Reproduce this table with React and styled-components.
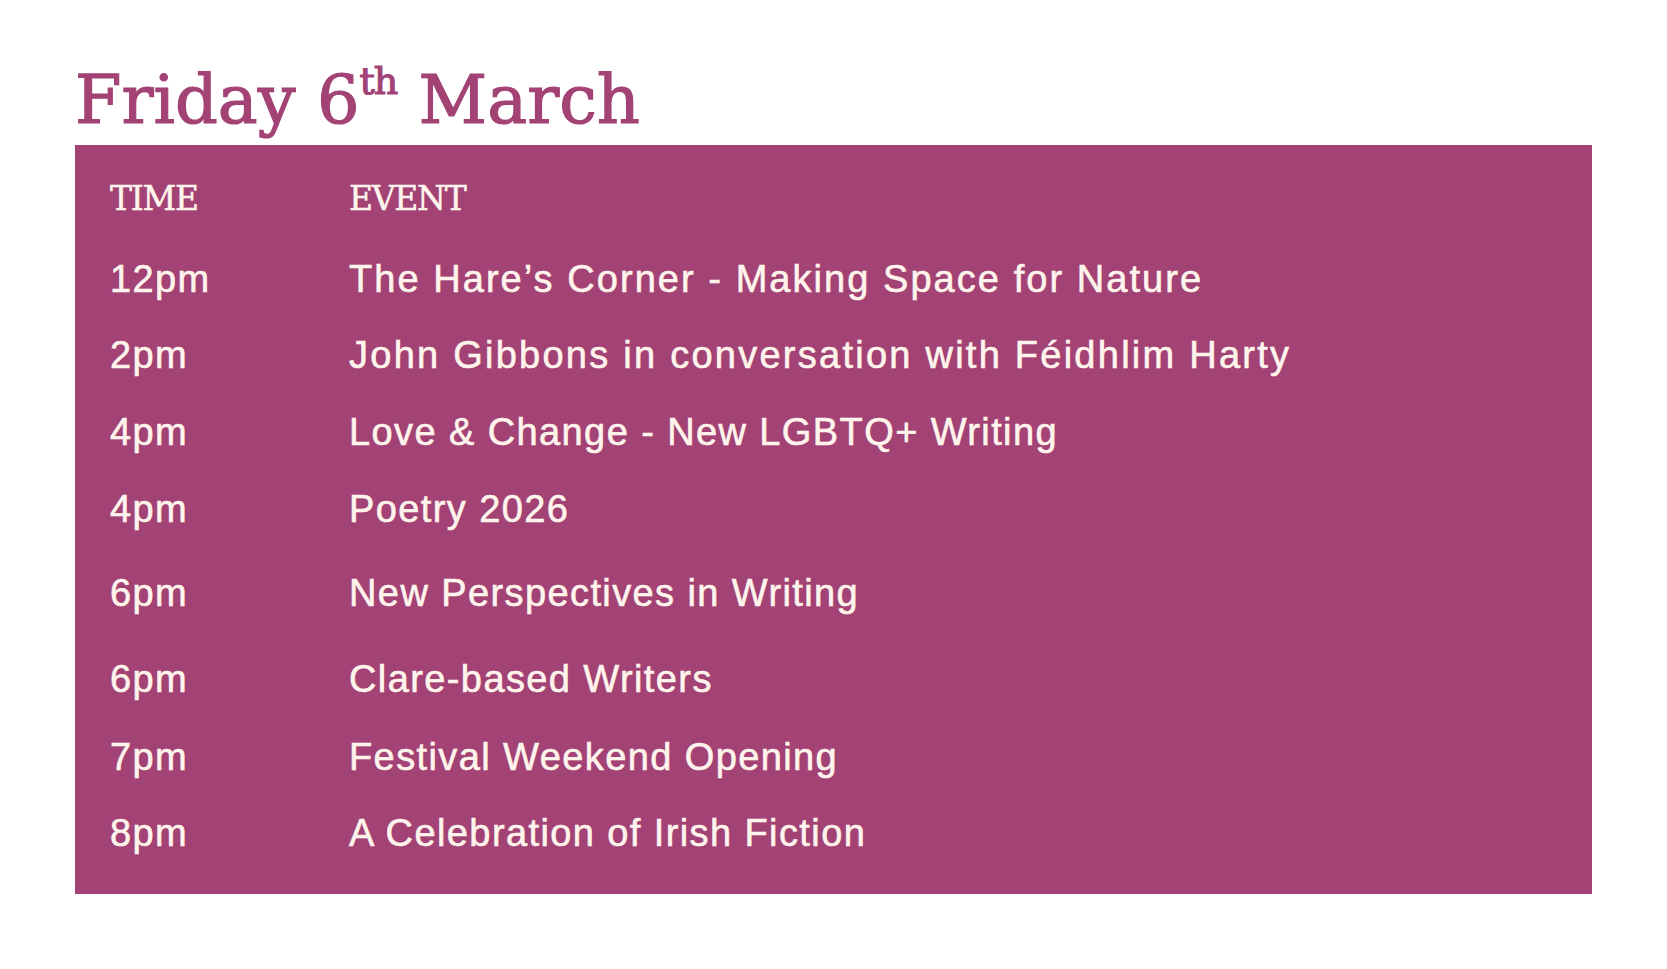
import React from 'react';
import styled, { createGlobalStyle } from 'styled-components';

const GlobalStyle = createGlobalStyle`
  html, body {
    margin: 0;
    padding: 0;
    background: #ffffff;
  }
`;

const Page = styled.div`
  padding: 67px 75px 0 75px;
`;

const Title = styled.h1`
  margin: 0 0 11px 0;
  font-family: "DejaVu Serif", serif;
  font-weight: 400;
  font-size: 67px;
  line-height: 67px;
  color: #a34275;
  -webkit-text-stroke: 1.2px #a34275;
`;

const Sup = styled.span`
  font-size: 38px;
  line-height: 0;
  vertical-align: 29px;
  letter-spacing: -1px;
`;

const Panel = styled.div`
  width: 1517px;
  box-sizing: border-box;
  background: #a34275;
  padding: 34px 35px 22px 35px;
  color: #fff4ec;
`;

const Row = styled.div`
  display: grid;
  grid-template-columns: 239px 1fr;
  margin-top: ${(p) => p.$extra || 0}px;
`;

const HeadCell = styled.div`
  font-family: "DejaVu Serif", serif;
  font-size: 33px;
  line-height: 40px;
  letter-spacing: -1.3px;
  -webkit-text-stroke: 0.5px #fff4ec;
  margin-bottom: 22px;
`;

const Cell = styled.div`
  font-family: "Liberation Sans", Arial, sans-serif;
  font-size: 38px;
  line-height: 77px;
  letter-spacing: ${(p) => p.$track || 1.4}px;
  -webkit-text-stroke: 0.6px #fff4ec;
`;

const events = [
  { time: '12pm', title: 'The Hare’s Corner - Making Space for Nature', track: 2.05 },
  { time: '2pm', title: 'John Gibbons in conversation with Féidhlim Harty', extra: -1, track: 2.25 },
  { time: '4pm', title: 'Love & Change - New LGBTQ+ Writing' },
  { time: '4pm', title: 'Poetry 2026' },
  { time: '6pm', title: 'New Perspectives in Writing', extra: 7 },
  { time: '6pm', title: 'Clare-based Writers', extra: 9 },
  { time: '7pm', title: 'Festival Weekend Opening', extra: 1 },
  { time: '8pm', title: 'A Celebration of Irish Fiction', extra: -1 },
];

const App = () => {
  return (
    <Page>
      <GlobalStyle />
      <Title>
        Friday 6<Sup>th</Sup> March
      </Title>
      <Panel>
        <Row>
          <HeadCell>TIME</HeadCell>
          <HeadCell>EVENT</HeadCell>
        </Row>
        {events.map((e, i) => (
          <Row key={i} $extra={e.extra}>
            <Cell>{e.time}</Cell>
            <Cell $track={e.track}>{e.title}</Cell>
          </Row>
        ))}
      </Panel>
    </Page>
  );
};

export default App;
